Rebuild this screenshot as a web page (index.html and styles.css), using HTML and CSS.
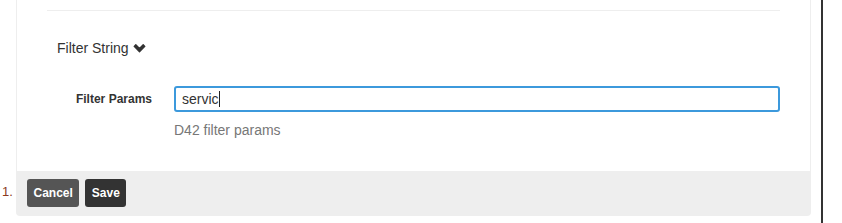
FILE: index.html
```html
<!DOCTYPE html>
<html lang="en">

<head>
    <meta charset="UTF-8">
    <title>Filter String</title>
    <link rel="stylesheet" href="styles.css">
</head>

<body>
    <div class="page">
        <div class="panel">
            <div class="body">
                <hr class="divider">
                <div class="toggle">
                    <span>Filter String</span>
                    <svg class="chevron" width="13" height="9" viewBox="0 0 13 9">
                        <path d="M1.2 2.4 L2.8 0.8 L6.5 4.5 L10.2 0.8 L11.8 2.4 L6.5 7.7 Z" fill="#333" stroke="#333" stroke-width="1.3" stroke-linejoin="round" />
                    </svg>
                </div>
                <div class="form-row">
                    <label class="label">Filter Params</label>
                    <div class="field">
                        <div class="input">servic<span class="caret"></span></div>
                        <p class="help">D42 filter params</p>
                    </div>
                </div>
            </div>
            <div class="footer">
                <span class="marker">1.</span>
                <button class="btn cancel">Cancel</button>
                <button class="btn save">Save</button>
            </div>
        </div>
        <div class="edge"></div>
    </div>
</body>

</html>
```

FILE: styles.css
```css
* {
    margin: 0;
    padding: 0;
    box-sizing: border-box;
    font-family: "Liberation Sans", Arial, sans-serif;
}

html,
body {
    height: 100%;
    background-color: #fff;
}

.page {
    display: flex;
    height: 223px;
}

.panel {
    width: 795px;
    height: 216px;
    margin-left: 16px;
    border-left: 1px solid #eee;
    border-right: 1px solid #eee;
    border-bottom: 1px solid #eee;
    border-radius: 0 0 4px 4px;
    display: flex;
    flex-direction: column;
}

.body {
    flex: 1;
    padding: 10px 30px 0 30px;
}

.divider {
    border: none;
    border-top: 1px solid #eee;
    height: 0;
}

.toggle {
    display: flex;
    align-items: center;
    gap: 4px;
    margin-top: 27px;
    padding-left: 10px;
    height: 20px;
    font-size: 14px;
    color: #333;
}

.chevron {
    margin-top: 1px;
}

.form-row {
    display: grid;
    grid-template-columns: 105px 1fr;
    column-gap: 22px;
    margin-top: 28px;
}

.label {
    text-align: right;
    font-size: 12px;
    font-weight: bold;
    color: #333;
    padding-top: 6px;
}

.input {
    height: 26px;
    border: 2px solid #3c99dc;
    border-radius: 3px;
    padding: 0 6px;
    font-size: 14px;
    line-height: 22px;
    color: #333;
    display: flex;
    align-items: center;
}

.caret {
    display: inline-block;
    width: 1px;
    height: 16px;
    background-color: #222;
}

.help {
    margin-top: 8px;
    font-size: 14px;
    line-height: 20px;
    color: #777;
}

.footer {
    position: relative;
    height: 44px;
    background-color: #eee;
    padding: 8px 10px 0 10px;
    display: flex;
    gap: 6px;
    align-items: flex-start;
}

.marker {
    position: absolute;
    left: -15px;
    top: 13px;
    font-size: 13px;
    color: #8b3a1e;
}

.btn {
    height: 28px;
    padding: 0 6.5px;
    border: none;
    border-radius: 3px;
    color: #fff;
    font-size: 12px;
    font-weight: bold;
}

.cancel {
    background-color: #555;
}

.save {
    background-color: #333;
}

.edge {
    width: 2px;
    height: 223px;
    margin-left: 10px;
    background-color: #333;
}
```
